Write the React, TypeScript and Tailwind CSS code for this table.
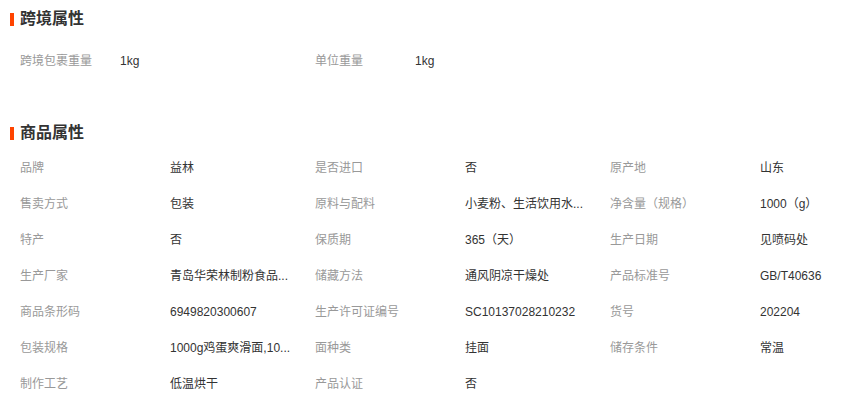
import React from "react";

const font = {
  fontFamily: '"Liberation Sans", "Noto Sans CJK SC", sans-serif',
};

function Heading({ title }: { title: string }) {
  return (
    <div className="flex items-center h-5 pl-[10px]">
      <span className="block w-[4px] h-[13px] bg-[#ff4400]" />
      <span className="ml-[6px] text-[16px] font-bold text-[#333] leading-5">{title}</span>
    </div>
  );
}

type Item = [string, string];

function Cell({ item, labelW }: { item: Item; labelW: string }) {
  return (
    <div className="flex items-center h-9 w-[295px] text-[12px]">
      <span className={`${labelW} shrink-0 text-[#999] whitespace-nowrap`}>{item[0]}</span>
      <span className="text-[#333] whitespace-nowrap">{item[1]}</span>
    </div>
  );
}

const cross: Item[] = [
  ["跨境包裹重量", "1kg"],
  ["单位重量", "1kg"],
];

const attrs: Item[] = [
  ["品牌", "益林"],
  ["是否进口", "否"],
  ["原产地", "山东"],
  ["售卖方式", "包装"],
  ["原料与配料", "小麦粉、生活饮用水..."],
  ["净含量（规格）", "1000（g）"],
  ["特产", "否"],
  ["保质期", "365（天）"],
  ["生产日期", "见喷码处"],
  ["生产厂家", "青岛华荣林制粉食品..."],
  ["储藏方法", "通风阴凉干燥处"],
  ["产品标准号", "GB/T40636"],
  ["商品条形码", "6949820300607"],
  ["生产许可证编号", "SC10137028210232"],
  ["货号", "202204"],
  ["包装规格", "1000g鸡蛋爽滑面,10..."],
  ["面种类", "挂面"],
  ["储存条件", "常温"],
  ["制作工艺", "低温烘干"],
  ["产品认证", "否"],
];

export default function App() {
  return (
    <div className="w-[859px] h-[402px] bg-white overflow-hidden" style={font}>
      <div className="pt-[9px]">
        <Heading title="跨境属性" />
      </div>
      <div className="mt-[14px] pl-[20px] flex">
        {cross.map((it, i) => (
          <Cell key={i} item={it} labelW="w-[100px]" />
        ))}
      </div>
      <div className="mt-[44px]">
        <Heading title="商品属性" />
      </div>
      <div className="mt-[7px] pl-[20px] grid grid-cols-[295px_295px_249px]">
        {attrs.map((it, i) => (
          <Cell key={i} item={it} labelW="w-[150px]" />
        ))}
      </div>
    </div>
  );
}
